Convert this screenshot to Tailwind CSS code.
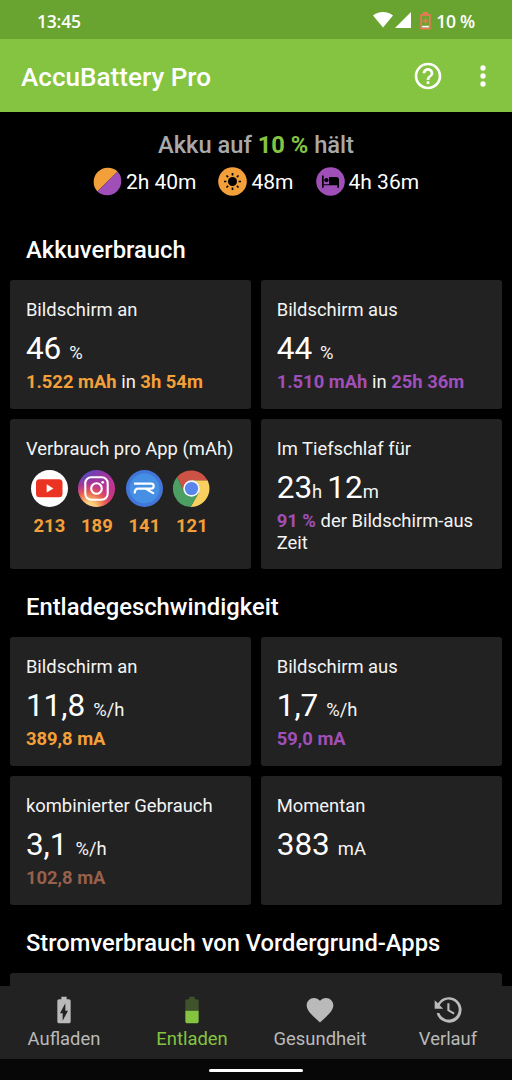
<!DOCTYPE html>
<html lang="de">
<head>
    <meta charset="UTF-8">
    <meta name="viewport" content="width=device-width, initial-scale=1.0">
    <title>AccuBattery Pro</title>
    <script src="https://cdn.jsdelivr.net/npm/@tailwindcss/browser@4"></script>
</head>
<body class="bg-black">
<div class="flex h-[1080px] w-[512px] flex-col overflow-hidden bg-black font-['Roboto',sans-serif] text-[18.4px] leading-[22px] text-[#f4f4f4]">

    <!-- Status bar -->
    <div class="flex h-[39px] shrink-0 items-center bg-[#69a430] pt-[3px] pr-[37px] pl-[37px] font-['Open_Sans',sans-serif] text-[17.5px] font-semibold text-white">
        <span class="tracking-[-0.2px]">13:45</span>
        <div class="ml-auto flex items-center">
            <svg class="mb-[2px] h-[16px] w-[20px]" viewBox="0 0 20 16" fill="#fff"><path d="M0 3.6C2.600 1.300 6 0 10 0s7.400 1.300 10 3.600L10 15.500z"/></svg>
            <svg class="mb-[2px] ml-[2px] h-[16px] w-[16px]" viewBox="0 0 16 16" fill="#fff"><path d="M16 0v16H0z"/></svg>
            <svg class="mb-[1px] ml-[9px] h-[18px] w-[11px]" viewBox="0 0 11 18" fill="none">
                <path d="M1.200 2.900h8.600v13.700H1.200z" stroke="#ee7556" stroke-width="1.800"/>
                <path d="M3 0h5v2.500H3z" fill="#ee7556"/>
                <path d="M5.500 6.300v5.400M2.800 9h5.400" stroke="#ee7556" stroke-width="1.600"/>
                <path d="M2.100 13.800h6.800v1.600H2.100z" fill="#fff"/>
            </svg>
            <span class="ml-[5px] tracking-[-0.2px]">10 %</span>
        </div>
    </div>

    <!-- App bar -->
    <div class="flex h-[73px] shrink-0 items-center bg-[#85c440] pt-[2px] pr-[13px] pl-[21px] text-white">
        <h1 class="text-[26.1px] leading-[32px] font-medium">AccuBattery Pro</h1>
        <svg class="mb-[2px] ml-auto h-[32px] w-[32px]" viewBox="0 0 24 24" fill="#fff"><path d="M11 18h2v-2h-2v2zm1-16C6.480 2 2 6.480 2 12s4.480 10 10 10 10-4.480 10-10S17.520 2 12 2zm0 18c-4.410 0-8-3.590-8-8s3.590-8 8-8 8 3.590 8 8-3.590 8-8 8zm0-14c-2.210 0-4 1.790-4 4h2c0-1.100.9-2 2-2s2 .9 2 2c0 2-3 1.750-3 5h2c0-2.250 3-2.500 3-5 0-2.210-1.790-4-4-4z"/></svg>
        <svg class="mb-[2px] ml-[23px] h-[32px] w-[32px]" viewBox="0 0 24 24" fill="#fff"><circle cx="12" cy="6" r="2"/><circle cx="12" cy="12" r="2"/><circle cx="12" cy="18" r="2"/></svg>
    </div>

    <main class="flex min-h-0 flex-1 flex-col overflow-hidden">
        <!-- Remaining time -->
        <div class="flex h-[111px] shrink-0 flex-col items-center pt-[19px]">
            <p class="text-[23.700px] leading-[28px] font-medium text-[#a9a9a9]">Akku auf <b class="font-bold text-[#85c440]">10 %</b> hält</p>
            <div class="mt-[8px] flex items-center text-[21px] leading-[28px] text-white">
                <svg class="mr-[4px] h-[29px] w-[29px]" viewBox="0 0 29 29"><path d="M4.400 24.600A14.300 14.300 0 0 1 24.600 4.400z" fill="#f4a03a"/><path d="M24.600 4.400A14.300 14.300 0 0 1 4.400 24.600z" fill="#a04fb9"/></svg>
                <span>2h 40m</span>
                <svg class="mr-[4px] ml-[22px] h-[29px] w-[29px]" viewBox="0 0 29 29">
                    <circle cx="14.500" cy="14.500" r="14.300" fill="#f4a03a"/>
                    <circle cx="14.500" cy="14.500" r="4.500"/>
                    <path d="M14.500 6v2.400M14.500 20.600V23M6 14.500h2.400M20.600 14.500H23M8.500 8.500l1.600 1.600M18.900 18.900l1.600 1.600M8.500 20.500l1.600-1.600M18.900 10.100l1.600-1.600" stroke="#000" stroke-width="1.700"/>
                </svg>
                <span>48m</span>
                <svg class="mr-[4px] ml-[22px] h-[29px] w-[29px]" viewBox="0 0 29 29">
                    <circle cx="14.500" cy="14.500" r="14.300" fill="#a04fb9"/>
                    <path d="M6 8.500h1.700v8.700h5.300V10h7.200a2.800 2.800 0 0 1 2.800 2.800v8h-1.700v-2.500H7.700v2.500H6z"/><circle cx="10.400" cy="13.200" r="2.100"/>
                </svg>
                <span>4h 36m</span>
            </div>
        </div>

        <h2 class="h-[57px] shrink-0 pt-[13px] pl-[26px] text-[23.800px] leading-[28px] font-medium text-white">Akkuverbrauch</h2>
        <div class="grid shrink-0 grid-cols-2 gap-[10.500px] pr-[10.500px] pl-[10.400px]">
            <div class="h-[128.500px] rounded-[3px] bg-[#222222] px-[15.500px] pt-[19px]">
                <p>Bildschirm an</p>
                <p class="mt-[10px] leading-[35px]"><span class="text-[31.500px] text-white">46</span><span class="ml-[8px]">%</span></p>
                <p class="mt-[1px]"><b class="text-[#f4a03a]">1.522 mAh</b> in <b class="text-[#f4a03a]">3h 54m</b></p>
            </div>
            <div class="h-[128.500px] rounded-[3px] bg-[#222222] px-[15.500px] pt-[19px]">
                <p>Bildschirm aus</p>
                <p class="mt-[10px] leading-[35px]"><span class="text-[31.500px] text-white">44</span><span class="ml-[8px]">%</span></p>
                <p class="mt-[1px]"><b class="text-[#a04fb9]">1.510 mAh</b> in <b class="text-[#a04fb9]">25h 36m</b></p>
            </div>
            <div class="h-[150px] rounded-[3px] bg-[#222222] px-[15.500px] pt-[19px]">
                <p class="whitespace-nowrap">Verbrauch pro App (mAh)</p>
                <div class="mt-[10px] flex gap-[10.500px] pl-[5px] font-bold text-[#f4a03a]">
                    <div class="flex w-[37px] flex-col items-center gap-[8px]">
                        <svg class="h-[37px] w-[37px]" viewBox="0 0 37 37"><circle cx="18.500" cy="18.500" r="18.500" fill="#fff"/><rect x="5" y="9.300" width="26.500" height="18" rx="3.500" fill="#ea3323"/><path d="M15.700 14.300l6.700 4.100-6.700 4.100z" fill="#fff"/></svg>
                        <span>213</span>
                    </div>
                    <div class="flex w-[37px] flex-col items-center gap-[8px]">
                        <svg class="h-[37px] w-[37px]" viewBox="0 0 37 37">
                            <defs>
                                <linearGradient id="igBase" x1="0.100" y1="0" x2="0.900" y2="0.900"><stop offset="0" stop-color="#4552cb"/><stop offset="0.350" stop-color="#9036a5"/><stop offset="0.700" stop-color="#c13593"/><stop offset="1" stop-color="#cf356b"/></linearGradient>
                                <radialGradient id="igGlow" cx="0.300" cy="1.050" r="0.900"><stop offset="0" stop-color="#fce4a0"/><stop offset="0.220" stop-color="#f8c975"/><stop offset="0.500" stop-color="#e8604f"/><stop offset="0.750" stop-color="#c83585" stop-opacity="0.600"/><stop offset="1" stop-color="#a035a0" stop-opacity="0"/></radialGradient>
                            </defs>
                            <circle cx="18.500" cy="18.500" r="18.500" fill="url(#igBase)"/><circle cx="18.500" cy="18.500" r="18.500" fill="url(#igGlow)"/>
                            <rect x="7.300" y="7.300" width="22.400" height="22.400" rx="6" fill="none" stroke="#fff" stroke-width="2.100"/>
                            <circle cx="18.500" cy="18.500" r="5.300" fill="none" stroke="#fff" stroke-width="2.100"/><circle cx="24.700" cy="12.300" r="1.400" fill="#fff"/>
                        </svg>
                        <span>189</span>
                    </div>
                    <div class="flex w-[37px] flex-col items-center gap-[8px]">
                        <svg class="h-[37px] w-[37px]" viewBox="0 0 37 37">
                            <circle cx="18.500" cy="18.500" r="18.500" fill="#4276d8"/><circle cx="18.500" cy="18.500" r="15" fill="#4590e4"/>
                            <path d="M8 13.600h17.200a2.500 2.500 0 0 1 0 5H12.200c-2.700 0-3.500 1.500-3.500 4.800M19.500 18.600l8.500 5" fill="none" stroke="#fff" stroke-width="2.200"/>
                        </svg>
                        <span>141</span>
                    </div>
                    <div class="flex w-[37px] flex-col items-center gap-[8px]">
                        <svg class="h-[37px] w-[37px]" viewBox="0 0 37 37">
                            <path d="M18.500 10.200h16A18.500 18.500 0 0 1 17.600 37l8.200-14.500z" fill="#f7d060"/>
                            <path d="M18.500 10.200h16A18.500 18.500 0 0 0 4 7l7.500 15.500z" fill="#cc5245"/>
                            <path d="M4 7a18.500 18.500 0 0 0 13.600 30l8.200-14.500L18.500 26l-7-3.500z" fill="#4c9f62"/>
                            <circle cx="18.500" cy="18.500" r="8.300" fill="#f4f6fb"/><circle cx="18.500" cy="18.500" r="6.600" fill="#5886ec"/>
                        </svg>
                        <span>121</span>
                    </div>
                </div>
            </div>
            <div class="h-[150px] rounded-[3px] bg-[#222222] px-[15.500px] pt-[19px]">
                <p>Im Tiefschlaf für</p>
                <p class="mt-[10px] leading-[35px]"><span class="text-[31.500px] text-white">23</span>h<span class="ml-[5px] text-[31.500px] text-white">12</span>m</p>
                <p class="mt-[1px]"><b class="text-[#a04fb9]">91 %</b> der Bildschirm-aus Zeit</p>
            </div>
        </div>

        <h2 class="h-[68px] shrink-0 pt-[24px] pl-[26px] text-[23.800px] leading-[28px] font-medium text-white">Entladegeschwindigkeit</h2>
        <div class="grid shrink-0 grid-cols-2 gap-[10.500px] pr-[10.500px] pl-[10.400px]">
            <div class="h-[128.500px] rounded-[3px] bg-[#222222] px-[15.500px] pt-[19px]">
                <p>Bildschirm an</p>
                <p class="mt-[10px] leading-[35px]"><span class="text-[31.500px] text-white">11,8</span><span class="ml-[8px]">%/h</span></p>
                <p class="mt-[1px] font-bold text-[#f4a03a]">389,8 mA</p>
            </div>
            <div class="h-[128.500px] rounded-[3px] bg-[#222222] px-[15.500px] pt-[19px]">
                <p>Bildschirm aus</p>
                <p class="mt-[10px] leading-[35px]"><span class="text-[31.500px] text-white">1,7</span><span class="ml-[8px]">%/h</span></p>
                <p class="mt-[1px] font-bold text-[#a04fb9]">59,0 mA</p>
            </div>
            <div class="h-[128.500px] rounded-[3px] bg-[#222222] px-[15.500px] pt-[19px]">
                <p>kombinierter Gebrauch</p>
                <p class="mt-[10px] leading-[35px]"><span class="text-[31.500px] text-white">3,1</span><span class="ml-[8px]">%/h</span></p>
                <p class="mt-[1px] font-bold text-[#97604a]">102,8 mA</p>
            </div>
            <div class="h-[128.500px] rounded-[3px] bg-[#222222] px-[15.500px] pt-[19px]">
                <p>Momentan</p>
                <p class="mt-[10px] leading-[35px]"><span class="text-[31.500px] text-white">383</span><span class="ml-[8px]">mA</span></p>
            </div>
        </div>

        <h2 class="h-[68px] shrink-0 pt-[24px] pl-[26px] text-[23.700px] leading-[28px] font-medium text-white">Stromverbrauch von Vordergrund-Apps</h2>
        <div class="mr-[10.500px] ml-[10.400px] h-[100px] shrink-0 rounded-[3px] bg-[#222222]"></div>
    </main>

    <!-- Bottom navigation -->
    <nav class="grid h-[73px] shrink-0 grid-cols-4 bg-[#222222] text-[18.400px] text-[#bababa]">
        <div class="flex flex-col items-center pt-[8px]">
            <svg class="h-[32px] w-[32px]" viewBox="0 0 24 24" fill="#bababa"><path fill-rule="evenodd" d="M15.670 4H14V2h-4v2H8.330C7.600 4 7 4.600 7 5.330v15.330C7 21.400 7.600 22 8.330 22h7.330c.740 0 1.340-.6 1.340-1.330V5.330C17 4.600 16.400 4 15.670 4zM11 20v-5.500H9L13 7v5.500h2L11 20z"/></svg>
            <span class="mt-[2px]">Aufladen</span>
        </div>
        <div class="flex flex-col items-center pt-[8px] text-[#85c440]">
            <svg class="h-[32px] w-[32px]" viewBox="0 0 24 24" fill="#85c440"><path fill-opacity=".3" d="M17 5.330C17 4.600 16.400 4 15.670 4H14V2h-4v2H8.330C7.600 4 7 4.600 7 5.330V12.500h10V5.330z"/><path d="M7 12.500v8.170C7 21.400 7.600 22 8.330 22h7.330c.740 0 1.340-.6 1.340-1.330V12.500H7z"/></svg>
            <span class="mt-[2px]">Entladen</span>
        </div>
        <div class="flex flex-col items-center pt-[8px]">
            <svg class="h-[32px] w-[32px]" viewBox="0 0 24 24" fill="#bababa"><path d="M12 21.350l-1.450-1.320C5.400 15.360 2 12.280 2 8.500 2 5.420 4.420 3 7.500 3c1.740 0 3.410.810 4.500 2.090C13.090 3.810 14.760 3 16.500 3 19.580 3 22 5.420 22 8.500c0 3.780-3.400 6.860-8.550 11.540L12 21.350z"/></svg>
            <span class="mt-[2px]">Gesundheit</span>
        </div>
        <div class="flex flex-col items-center pt-[8px]">
            <svg class="h-[32px] w-[32px]" viewBox="0 0 24 24" fill="#bababa"><path d="M12.500 2.500A9.400 9.400 0 0 0 4.500 7L2 4.600V11h6.400L5.800 8.400A7.500 7.500 0 1 1 5.500 14.300H3.500A9.500 9.500 0 1 0 12.500 2.500zM11.500 7v5.600l4.700 2.800.8-1.300-3.900-2.300V7z"/></svg>
            <span class="mt-[2px]">Verlauf</span>
        </div>
    </nav>
    <div class="flex h-[21px] shrink-0 items-center justify-center bg-[#070707]">
        <div class="mt-[2px] h-[3px] w-[94px] rounded-full bg-white"></div>
    </div>
</div>
</body>
</html>
